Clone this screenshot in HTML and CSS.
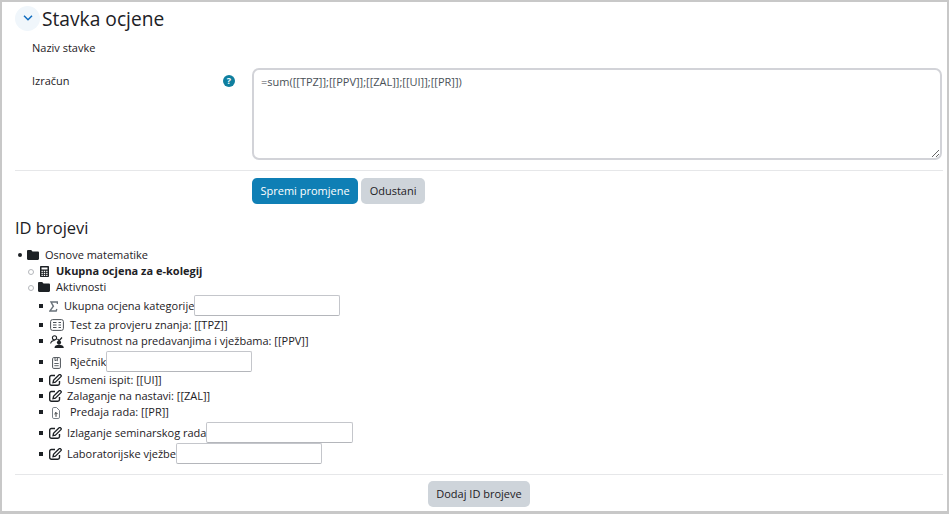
FILE: index.html
```html
<!DOCTYPE html>
<html lang="hr">
<head>
<meta charset="utf-8">
<title>Stavka ocjene</title>
<link rel="stylesheet" href="styles.css">
</head>
<body>
<div class="frame">
  <div class="section-head">
    <span class="toggle"><svg width="10" height="6" viewBox="0 0 10 6"><path d="M1 .8l4 4 4-4" fill="none" stroke="#0f6cbf" stroke-width="1.500"/></svg></span>
    <h2 class="title">Stavka ocjene</h2>
  </div>
  <div class="form-row name-row"><span class="label">Naziv stavke</span></div>
  <div class="form-row calc-row">
    <span class="label">Izračun</span>
    <span class="help">?</span>
    <textarea class="formula">=sum([[TPZ]];[[PPV]];[[ZAL]];[[UI]];[[PR]])</textarea>
  </div>
  <div class="actions">
    <button class="btn primary">Spremi promjene</button>
    <button class="btn">Odustani</button>
  </div>
  <h3 class="subtitle">ID brojevi</h3>
  <ul class="tree">
    <li class="item"><svg class="icon folder" viewBox="0 0 12 10"><path d="M0 1.200C0 .5.5 0 1.200 0h3l1.300 1.400h5.300c.7 0 1.200.5 1.200 1.200v6.200c0 .7-.5 1.200-1.200 1.200H1.200C.5 10 0 9.500 0 8.800z"/></svg><span class="gap">Osnove matematike</span>
      <ul class="level-2">
        <li class="item"><svg class="icon calc" viewBox="0 0 9 11"><path fill-rule="evenodd" d="M1 0h7c.6 0 1 .4 1 1v9c0 .6-.4 1-1 1H1c-.6 0-1-.4-1-1V1c0-.6.4-1 1-1zm.5 1.500v2h6v-2zm0 3.200v1.200h1.300V4.700zm2.300 0v1.200h1.400V4.700zm2.400 0v1.200h1.300V4.700zM1.500 6.800V8h1.300V6.800zm2.300 0V8h1.400V6.800zm2.400 0V8h1.300V6.800zM1.500 8.800V10h1.300V8.800zm2.300 0V10h1.400V8.800zm2.400 0V10h1.300V8.800z"/></svg><strong class="gap-7">Ukupna ocjena za e-kolegij</strong></li>
        <li class="item"><svg class="icon folder" viewBox="0 0 12 10"><path d="M0 1.200C0 .5.5 0 1.200 0h3l1.300 1.400h5.300c.7 0 1.200.5 1.200 1.200v6.200c0 .7-.5 1.200-1.200 1.200H1.200C.5 10 0 9.500 0 8.800z"/></svg><span class="gap">Aktivnosti</span>
          <ul class="level-3">
            <li class="item input-item row-cat"><svg class="icon sum" viewBox="0 0 9 11"><path d="M8.400 3V1H2l2.400 4.300L.8 10h6.400l.6-2" fill="none" stroke="#6a737b" stroke-width="1.400"/></svg><span class="gap">Ukupna ocjena kategorije</span><input class="id-input" type="text"></li>
            <li class="item"><svg class="icon quiz" viewBox="0 0 14 12"><rect x=".6" y=".6" width="12.800" height="10.800" rx="2" fill="none" stroke="#4a5056" stroke-width="1"/><path d="M3 3.500h3.500M3 6h3.500M3 8.500h3.500M8.500 3.500h2.500M8.500 6h2.500M8.500 8.500h2.500" stroke="#4a5056" stroke-width="1"/></svg><span class="gap">Test za provjeru znanja: [[TPZ]]</span></li>
            <li class="item"><svg class="icon attend" viewBox="0 0 14 13"><circle cx="4.500" cy="2.800" r="2.100" fill="none" stroke="#1d2125" stroke-width="1.100"/><path d="M.6 8.500c.4-2 2-3 4-3" fill="none" stroke="#1d2125" stroke-width="1.100"/><path d="M7.500 4l1.700 1.700 2.800-3.200" fill="none" stroke="#1d2125" stroke-width="1.200"/><circle cx="9" cy="7.600" r="2.100"/><path d="M4.500 13c0-2 1.800-3.200 4.500-3.200s4.800 1.200 4.800 3.200z"/></svg><span class="gap">Prisutnost na predavanjima i vježbama: [[PPV]]</span></li>
            <li class="item input-item row-tall"><svg class="icon glossary" viewBox="0 0 9 12"><rect x=".6" y=".6" width="7.800" height="10.800" rx="1.100" fill="none" stroke="#4a5056"/><path d="M3 1v2.800l1.200-.8 1.200.8V1M2.300 6.500h4.400M2.300 8.700h4.400" fill="none" stroke="#4a5056" stroke-width=".9"/></svg><span class="gap-9">Rječnik</span><input class="id-input" type="text"></li>
            <li class="item"><svg class="icon edit" viewBox="0 0 13 12"><use href="#edit"/></svg><span class="gap-5">Usmeni ispit: [[UI]]</span></li>
            <li class="item"><svg class="icon edit" viewBox="0 0 13 12"><use href="#edit"/></svg><span class="gap-5">Zalaganje na nastavi: [[ZAL]]</span></li>
            <li class="item"><svg class="icon assign" viewBox="0 0 8 12"><path d="M.5 1.800C.5 1 1 .5 1.800.5h2.700l3 3v6.700c0 .8-.5 1.300-1.300 1.300H1.800C1 11.500.5 11 .5 10.200z" fill="none" stroke="#6a737b" stroke-width=".9"/><path d="M4 9.800V5.500M2.400 7.100L4 5.500l1.600 1.600" fill="none" stroke="#1d2125" stroke-width=".9"/></svg><span class="gap-10">Predaja rada: [[PR]]</span></li>
            <li class="item input-item row-tall"><svg class="icon edit" viewBox="0 0 13 12"><use href="#edit"/></svg><span class="gap-5">Izlaganje seminarskog rada</span><input class="id-input wider" type="text"></li>
            <li class="item input-item row-last"><svg class="icon edit" viewBox="0 0 13 12"><use href="#edit"/></svg><span class="gap-5">Laboratorijske vježbe</span><input class="id-input" type="text"></li>
          </ul>
        </li>
      </ul>
    </li>
  </ul>
  <div class="footer"><button class="btn">Dodaj ID brojeve</button></div>
</div>
<svg class="defs" width="0" height="0"><defs><g id="edit" fill="none" stroke="#1d2125"><path d="M10.500 7v2.600c0 1-.7 1.700-1.700 1.700H2.400c-1 0-1.700-.7-1.700-1.700V3.200c0-1 .7-1.700 1.700-1.700H6" stroke-width="1.400"/><path d="M4.500 6.300L4 8.700l2.400-.5 5.600-5.600c.4-.4.400-1 0-1.300l-.6-.6c-.4-.4-1-.4-1.300 0z" stroke-width="1.300"/></g></defs></svg>
</body>
</html>
```
FILE: styles.css
```css
* { box-sizing: border-box; }
html, body { margin: 0; padding: 0; height: 100%; overflow: hidden; background: #fff; }
body { font-family: "Open Sans", sans-serif; font-size: 11px; line-height: 16px; color: #1d2125; }
.frame { height: 514px; border: 2px solid #c8c8c8; border-bottom-width: 3px; padding: 0 4px 0 13px; display: flex; flex-direction: column; }
.section-head { display: flex; align-items: center; height: 26px; margin-top: 3px; }
.toggle { width: 25px; height: 25px; border-radius: 50%; background: #f0f6fb; display: flex; align-items: center; justify-content: center; flex: none; }
.title { margin: 2px 0 0 2px; font-size: 19.200px; line-height: 26px; font-weight: 400; }
.form-row { display: flex; padding-left: 17px; }
.name-row { margin-top: 9px; height: 16px; }
.calc-row { margin-top: 12px; height: 92px; align-items: flex-start; }
.label { width: 191px; flex: none; }
.calc-row .label { margin-top: 5px; }
.help { width: 12px; height: 12px; margin-top: 7px; margin-right: 17px; flex: none; border-radius: 50%; background: #0f7f9f; color: #fff; font-size: 9px; font-weight: 700; line-height: 12px; text-align: center; }
.formula { width: 690px; height: 92px; border: 2px solid #d2d3d8; border-radius: 7px; padding: 4px 7px; font: 11px/16px "Open Sans", sans-serif; color: #495057; resize: both; outline: none; }
.actions { margin-top: 10px; border-top: 1px solid #e6e7e9; padding: 7px 0 0 237px; display: flex; gap: 3px; }
.btn { height: 26px; padding: 0 8.500px; border: 0; border-radius: 5px; background: #ced4da; color: #1d2125; font: 11px/16px "Open Sans", sans-serif; }
.primary { background: #0f7fb5; color: #fff; }
.subtitle { margin: 13px 0 0; font-size: 16.500px; line-height: 22px; font-weight: 400; }
.tree { margin: 8px 0 0; padding: 0 0 0 12px; list-style: none; }
.tree ul { margin: 0; padding: 0 0 0 11px; list-style: none; }
.item { position: relative; min-height: 16px; }
.item::before { content: ""; position: absolute; top: 6px; left: -9px; width: 4px; height: 4px; border-radius: 50%; background: #1d2125; }
.level-2 > .item::before { left: -10px; background: #fff; border: 1px solid #b4b7bb; }
.level-3 > .item::before { border-radius: 0; left: -10px; }
.input-item { line-height: 21px; }
.input-item::before { top: 9px; }
.row-cat { height: 22px; }
.row-tall { height: 23px; padding-top: 2px; }
.level-3 > .row-tall::before { top: 11px; }
.row-last { height: 21px; }
.icon { display: inline-block; vertical-align: -2px; fill: #1d2125; }
.folder { width: 12px; height: 10px; vertical-align: -1px; }
.calc { width: 9px; height: 11px; margin-left: 2px; }
.sum { width: 9px; height: 11px; }
.quiz { width: 14px; height: 12px; margin-left: 1px; }
.attend { width: 14px; height: 13px; margin-left: 1px; vertical-align: -3px; }
.glossary { width: 9px; height: 12px; margin-left: 3px; vertical-align: -3px; }
.edit { width: 13px; height: 12px; }
.assign { width: 8px; height: 12px; margin-left: 3px; vertical-align: -3px; }
.gap { margin-left: 6px; }
.gap-5 { margin-left: 5px; }
.gap-7 { margin-left: 7px; }
.gap-9 { margin-left: 9px; }
.gap-10 { margin-left: 10px; }
.id-input { width: 146px; height: 21px; margin-top: -4px; border: 1px solid #c4c6cb; border-bottom-color: #b4b6bb; border-radius: 2px; padding: 0 4px; vertical-align: middle; background: #fff; outline: none; }
.wider { width: 147px; }
.footer { margin-top: 10px; border-top: 1px solid #e6e7e9; padding-top: 6px; display: flex; justify-content: center; }
.defs { position: absolute; }
```
